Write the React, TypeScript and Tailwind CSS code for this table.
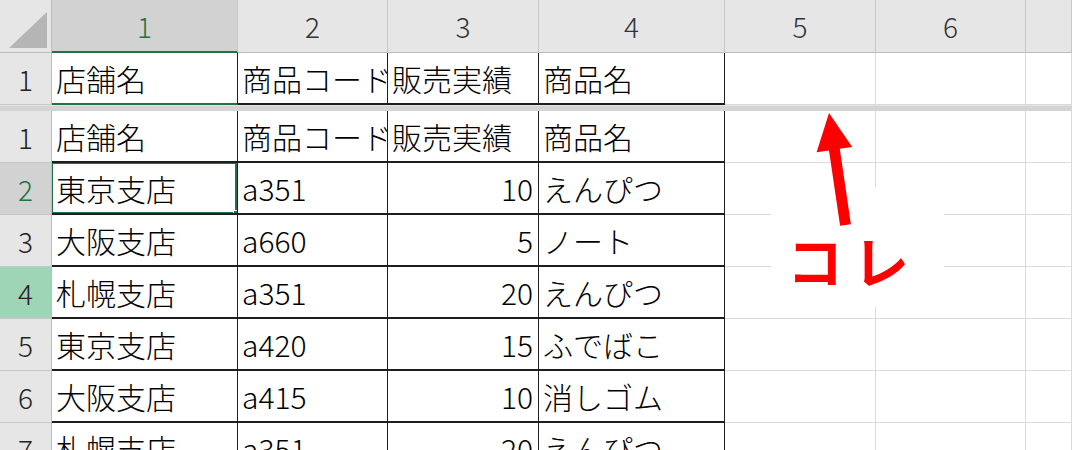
import React from 'react';

const font = { fontFamily: '"Noto Sans CJK JP", "Noto Sans", sans-serif' };

const colWidths = ['w-[186px]', 'w-[150px]', 'w-[151px]', 'w-[186px]', 'w-[151px]', 'w-[150px]', 'flex-1'];

const rows: string[][] = [
    ['店舗名', '商品コード', '販売実績', '商品名'],
    ['東京支店', 'a351', '10', 'えんぴつ'],
    ['大阪支店', 'a660', '5', 'ノート'],
    ['札幌支店', 'a351', '20', 'えんぴつ'],
    ['東京支店', 'a420', '15', 'ふでばこ'],
    ['大阪支店', 'a415', '10', '消しゴム'],
    ['札幌支店', 'a351', '20', 'えんぴつ'],
];

const RowHeader = ({ n, state }: { n: number; state?: 'selected' | 'hl' }) => {
    let cls = 'bg-[#e6e6e6] text-[#222]';
    if (state === 'selected') cls = 'bg-[#d2d2d2] text-[#217346]';
    if (state === 'hl') cls = 'bg-[#9fd5b7] text-[#222]';
    return (
        <div className={`w-[52px] shrink-0 flex items-center justify-center border-r border-b border-r-[#bdbdbd] border-b-[#c6c6c6] text-[28px] font-light ${cls}`}>
            {n}
        </div>
    );
};

const DataRow = ({ cells, n, state, frozen, selectA }: { cells: string[]; n: number; state?: 'selected' | 'hl'; frozen?: boolean; selectA?: boolean }) => (
    <div className="flex h-[52px]">
        <RowHeader n={n} state={state} />
        {colWidths.map((w, i) => {
            const inTable = i < 4;
            const text = cells[i] ?? '';
            const isNum = i === 2 && /^\d+$/.test(text);
            let border = inTable ? 'border-r border-b-2 border-[#1e1e1e]' : 'border-r border-b border-[#dadada]';
            if (frozen && i === 0) border = 'border-r border-b-2 border-r-[#1e1e1e] border-b-[#217346]';
            return (
                <div
                    key={i}
                    className={`${w} shrink-0 relative flex items-center overflow-hidden whitespace-nowrap text-[30px] font-light text-black bg-white ${border} ${isNum ? 'justify-end pr-[5px]' : 'pl-[4px]'}`}
                >
                    {text}
                    {selectA && i === 0 && (
                        <div className="absolute -left-[2px] -top-[2px] -right-[1px] -bottom-[2px] border-[3px] border-[#217346]">
                            <div className="absolute -right-[5px] -bottom-[5px] w-[7px] h-[7px] bg-[#217346] border border-white" />
                        </div>
                    )}
                </div>
            );
        })}
    </div>
);

export default function App() {
    return (
        <div className="relative w-[1072px] h-[450px] overflow-hidden bg-white" style={font}>
            {/* column headers */}
            <div className="flex h-[53px]">
                <div className="w-[52px] shrink-0 bg-[#e6e6e6] border-r border-b border-[#bdbdbd] flex items-end justify-end pr-[4px] pb-[4px]">
                    <svg width="38" height="36" viewBox="0 0 38 36">
                        <polygon points="0,36 38,36 38,0" fill="#b5b5b5" />
                    </svg>
                </div>
                {colWidths.map((w, i) => (
                    <div
                        key={i}
                        className={`${w} shrink-0 flex items-center justify-center text-[28px] font-light border-r border-r-[#c8c8c8] ${i === 0 ? 'bg-[#d2d2d2] text-[#217346] border-b-2 border-b-[#217346]' : 'bg-[#e6e6e6] text-[#333] border-b border-b-[#bdbdbd]'}`}
                    >
                        {i < 6 ? i + 1 : ''}
                    </div>
                ))}
            </div>

            {/* frozen row */}
            <DataRow cells={rows[0]} n={1} frozen />

            {/* split bar */}
            <div className="h-[6px] bg-[#d4d4d4] border-t border-[#e4e4e4]" />

            {/* lower pane */}
            {rows.map((r, idx) => (
                <DataRow
                    key={idx}
                    cells={r}
                    n={idx + 1}
                    state={idx === 1 ? 'selected' : idx === 3 ? 'hl' : undefined}
                    selectA={idx === 1}
                />
            ))}

            {/* callout */}
            <div className="absolute left-[771px] top-[187px] w-[173px] h-[120px] bg-white pl-[16px] pt-[44px]">
                <span className="text-[56px] leading-none font-bold text-[#ff0000] tracking-[10px]">コレ</span>
            </div>
            <svg className="absolute left-0 top-0" width="1072" height="450" viewBox="0 0 1072 450">
                <polygon
                    points="829,113 852.2,147 839.8,148.8 850.9,224.2 840.1,225.8 829,150.4 816.6,152.2"
                    fill="#ff0000"
                />
            </svg>
        </div>
    );
}
